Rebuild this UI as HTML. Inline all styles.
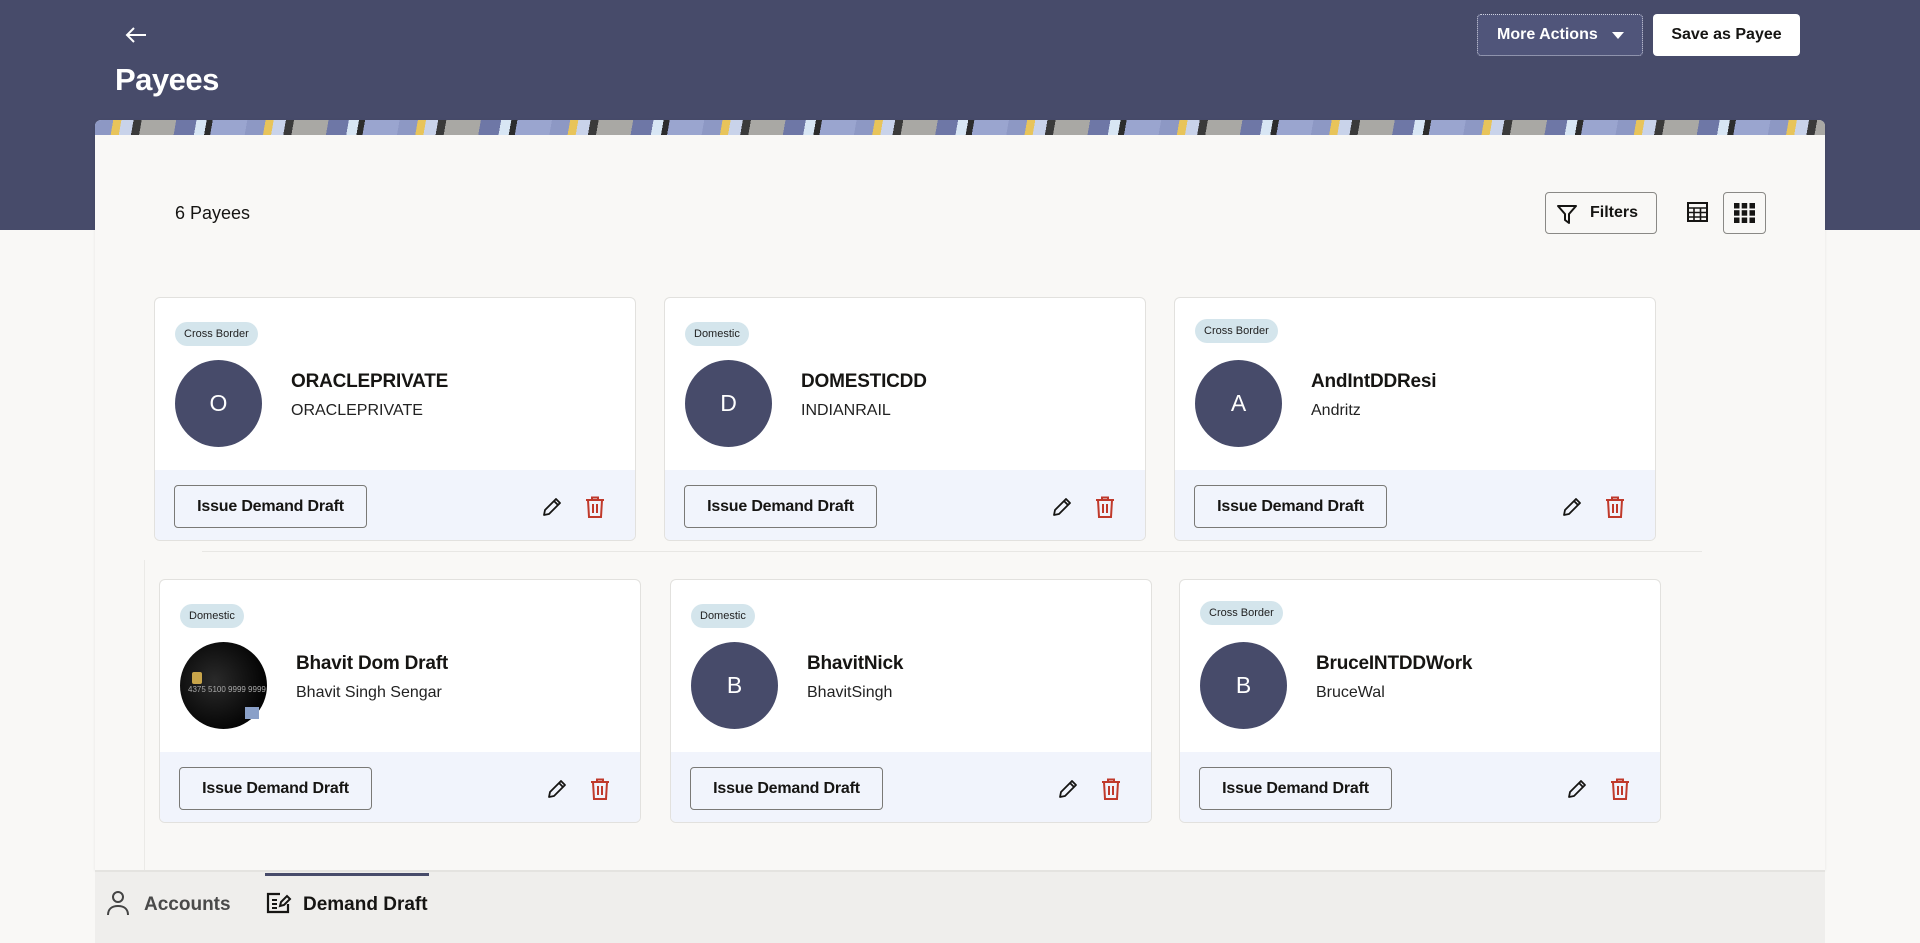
<!DOCTYPE html>
<html><head><meta charset="utf-8"><style>
*{box-sizing:border-box;margin:0;padding:0}
body{width:1920px;height:943px;overflow:hidden;background:#f9f8f6;font-family:"Liberation Sans",sans-serif;position:relative;color:#161513}
.hdr{position:absolute;left:0;top:0;width:1920px;height:230px;background:#474b6a}
.abs{position:absolute}
.panel{position:absolute;left:95px;top:120px;width:1730px;height:750px;background:#f9f8f6;border-radius:6px 6px 0 0;overflow:hidden;box-shadow:0 1px 3px rgba(0,0,0,.08)}
.strip{position:absolute;left:0;top:0;width:100%;height:15px;background:repeating-linear-gradient(100deg,#8d98c4 0 18px,#e8c45a 18px 26px,#c9d3ea 26px 38px,#3a3a3a 38px 46px,#a9a8a4 46px 80px,#6e77a6 80px 100px,#d8e6f4 100px 110px,#2c2c2c 110px 116px,#9aa5cf 116px 150px)}
.card{position:absolute;width:482px;height:244px;background:#fff;border:1px solid #e2e1de;border-radius:6px;overflow:hidden}
.chip{position:absolute;left:20px;top:24px;height:24px;padding:0 9px;border-radius:12px;background:#d4e5ec;font-size:11px;line-height:24px;color:#222}
.av{position:absolute;left:20px;top:62px;width:87px;height:87px;border-radius:50%;background:#474b6a;color:#fff;font-size:23px;text-align:center;line-height:87px}
.nm{position:absolute;left:136px;top:73px;font-size:19px;font-weight:bold;letter-spacing:-.2px}
.sb{position:absolute;left:136px;top:104px;font-size:16px;color:#222}
.ft{position:absolute;left:0;top:172px;width:100%;height:72px;background:#f1f4fc}
.btn{position:absolute;left:19px;top:15px;width:193px;height:43px;border:1px solid #7a7976;border-radius:4px;font-size:16px;font-weight:bold;text-align:center;line-height:41px;letter-spacing:-.2px}
.ed{position:absolute;left:386px;top:26px}
.tr{position:absolute;left:429px;top:26px}
</style></head><body>
<div class="hdr"></div>
<svg class="abs" style="left:124px;top:26px" width="24" height="18" viewBox="0 0 24 18"><path d="M22 9H3M10 2L3 9l7 7" stroke="#fff" stroke-width="2" fill="none"/></svg>
<div class="abs" style="left:115px;top:62px;font-size:31px;font-weight:bold;color:#fff;letter-spacing:-.5px">Payees</div>
<div class="abs" style="left:1477px;top:14px;width:166px;height:42px;border:1px dotted #cfd2e0;border-radius:4px;background:#50557a;color:#fff;font-size:16px;font-weight:bold;line-height:40px;padding-left:19px">More Actions<span style="position:absolute;right:18px;top:17px;border:6px solid transparent;border-top:7px solid #fff;border-bottom:0"></span></div>
<div class="abs" style="left:1653px;top:14px;width:147px;height:42px;border-radius:4px;background:#fff;font-size:16px;font-weight:bold;line-height:42px;text-align:center">Save as Payee</div>
<div class="panel"><div class="strip"></div></div>
<div class="abs" style="left:175px;top:203px;font-size:18px">6 Payees</div>
<div class="abs" style="left:1545px;top:192px;width:112px;height:42px;border:1px solid #8a8986;border-radius:4px;font-size:16px;font-weight:bold;line-height:40px;padding-left:44px">Filters
<svg class="abs" style="left:10px;top:10px" width="22" height="22" viewBox="0 0 22 22"><path d="M2 3h18l-7 8v9l-4-3v-6z" stroke="#161513" stroke-width="2" fill="none" stroke-linejoin="round"/></svg></div>
<svg class="abs" style="left:1687px;top:202px" width="21" height="20" viewBox="0 0 21 20"><rect x="1" y="1" width="19" height="18" fill="none" stroke="#161513" stroke-width="2"/><path d="M1 6h19M1 10.5h19M1 15h19M7 6v13M13.5 6v13" stroke="#161513" stroke-width="1.6"/></svg>
<div class="abs" style="left:1723px;top:192px;width:43px;height:42px;border:1px solid #8a8986;border-radius:4px"></div>
<svg class="abs" style="left:1734px;top:203px" width="21" height="20" viewBox="0 0 21 20"><g fill="#161513"><rect x="0" y="0" width="5.5" height="5.5"/><rect x="7.7" y="0" width="5.5" height="5.5"/><rect x="15.5" y="0" width="5.5" height="5.5"/><rect x="0" y="7.2" width="5.5" height="5.5"/><rect x="7.7" y="7.2" width="5.5" height="5.5"/><rect x="15.5" y="7.2" width="5.5" height="5.5"/><rect x="0" y="14.5" width="5.5" height="5.5"/><rect x="7.7" y="14.5" width="5.5" height="5.5"/><rect x="15.5" y="14.5" width="5.5" height="5.5"/></g></svg>
<div class="abs" style="left:202px;top:551px;width:1500px;height:1px;background:#e8e7e4"></div>
<div class="abs" style="left:144px;top:560px;width:1px;height:310px;background:#ebeae7"></div>

<div class="card" style="left:154px;top:297px"><div class="chip">Cross Border</div><div class="av">O</div><div class="nm">ORACLEPRIVATE</div><div class="sb">ORACLEPRIVATE</div><div class="ft"><div class="btn">Issue Demand Draft</div>
<svg class="ed" width="22" height="22" viewBox="0 0 22 22"><path d="M3 19l1-5L15 3l4 4L8 18zM13 5l4 4" stroke="#161513" stroke-width="1.8" fill="none" stroke-linejoin="round"/></svg>
<svg class="tr" width="22" height="22" viewBox="0 0 22 22"><path d="M2 4h18M8 4V1.5h6V4M4 4l1 17h12l1-17M9 8v9M13 8v9" stroke="#c0392b" stroke-width="2" fill="none"/></svg></div></div>

<div class="card" style="left:664px;top:297px"><div class="chip">Domestic</div><div class="av">D</div><div class="nm">DOMESTICDD</div><div class="sb">INDIANRAIL</div><div class="ft"><div class="btn">Issue Demand Draft</div>
<svg class="ed" width="22" height="22" viewBox="0 0 22 22"><path d="M3 19l1-5L15 3l4 4L8 18zM13 5l4 4" stroke="#161513" stroke-width="1.8" fill="none" stroke-linejoin="round"/></svg>
<svg class="tr" width="22" height="22" viewBox="0 0 22 22"><path d="M2 4h18M8 4V1.5h6V4M4 4l1 17h12l1-17M9 8v9M13 8v9" stroke="#c0392b" stroke-width="2" fill="none"/></svg></div></div>

<div class="card" style="left:1174px;top:297px"><div class="chip" style="top:21px">Cross Border</div><div class="av">A</div><div class="nm">AndIntDDResi</div><div class="sb">Andritz</div><div class="ft"><div class="btn">Issue Demand Draft</div>
<svg class="ed" width="22" height="22" viewBox="0 0 22 22"><path d="M3 19l1-5L15 3l4 4L8 18zM13 5l4 4" stroke="#161513" stroke-width="1.8" fill="none" stroke-linejoin="round"/></svg>
<svg class="tr" width="22" height="22" viewBox="0 0 22 22"><path d="M2 4h18M8 4V1.5h6V4M4 4l1 17h12l1-17M9 8v9M13 8v9" stroke="#c0392b" stroke-width="2" fill="none"/></svg></div></div>

<div class="card" style="left:159px;top:579px"><div class="chip">Domestic</div><div class="av" style="background:radial-gradient(circle at 40% 45%,#2a2a2a,#050505 70%)"><span style="position:absolute;left:12px;top:30px;width:10px;height:12px;background:#c9a54a;border-radius:2px"></span><span style="position:absolute;left:8px;top:44px;font-size:8px;line-height:8px;color:#aaa">4375 5100 9999 9999</span><span style="position:absolute;right:8px;bottom:10px;width:14px;height:12px;background:#8aa0c8"></span></div><div class="nm">Bhavit Dom Draft</div><div class="sb">Bhavit Singh Sengar</div><div class="ft"><div class="btn">Issue Demand Draft</div>
<svg class="ed" width="22" height="22" viewBox="0 0 22 22"><path d="M3 19l1-5L15 3l4 4L8 18zM13 5l4 4" stroke="#161513" stroke-width="1.8" fill="none" stroke-linejoin="round"/></svg>
<svg class="tr" width="22" height="22" viewBox="0 0 22 22"><path d="M2 4h18M8 4V1.5h6V4M4 4l1 17h12l1-17M9 8v9M13 8v9" stroke="#c0392b" stroke-width="2" fill="none"/></svg></div></div>

<div class="card" style="left:670px;top:579px"><div class="chip">Domestic</div><div class="av">B</div><div class="nm">BhavitNick</div><div class="sb">BhavitSingh</div><div class="ft"><div class="btn">Issue Demand Draft</div>
<svg class="ed" width="22" height="22" viewBox="0 0 22 22"><path d="M3 19l1-5L15 3l4 4L8 18zM13 5l4 4" stroke="#161513" stroke-width="1.8" fill="none" stroke-linejoin="round"/></svg>
<svg class="tr" width="22" height="22" viewBox="0 0 22 22"><path d="M2 4h18M8 4V1.5h6V4M4 4l1 17h12l1-17M9 8v9M13 8v9" stroke="#c0392b" stroke-width="2" fill="none"/></svg></div></div>

<div class="card" style="left:1179px;top:579px"><div class="chip" style="top:21px">Cross Border</div><div class="av">B</div><div class="nm">BruceINTDDWork</div><div class="sb">BruceWal</div><div class="ft"><div class="btn">Issue Demand Draft</div>
<svg class="ed" width="22" height="22" viewBox="0 0 22 22"><path d="M3 19l1-5L15 3l4 4L8 18zM13 5l4 4" stroke="#161513" stroke-width="1.8" fill="none" stroke-linejoin="round"/></svg>
<svg class="tr" width="22" height="22" viewBox="0 0 22 22"><path d="M2 4h18M8 4V1.5h6V4M4 4l1 17h12l1-17M9 8v9M13 8v9" stroke="#c0392b" stroke-width="2" fill="none"/></svg></div></div>

<div class="abs" style="left:95px;top:870px;width:1730px;height:73px;background:#efeeec;border-top:2px solid #e4e3e0"></div>
<div class="abs" style="left:265px;top:873px;width:164px;height:3px;background:#474b6a"></div>
<svg class="abs" style="left:107px;top:890px" width="22" height="26" viewBox="0 0 22 26"><circle cx="11" cy="7" r="5" stroke="#444" stroke-width="2" fill="none"/><path d="M1 25c0-6 4-9 10-9s10 3 10 9" stroke="#444" stroke-width="2" fill="none"/></svg>
<div class="abs" style="left:144px;top:894px;font-size:19px;font-weight:bold;color:#4a4a4a">Accounts</div>
<svg class="abs" style="left:266px;top:892px" width="26" height="22" viewBox="0 0 26 22"><path d="M14 2H2v18h20v-8" stroke="#161513" stroke-width="2.2" fill="none"/><path d="M6 8h5M6 12h5M6 16h5M14 14l1-4 6-6 3 3-6 6z" stroke="#161513" stroke-width="2" fill="none"/></svg>
<div class="abs" style="left:303px;top:894px;font-size:19px;font-weight:bold">Demand Draft</div>
</body></html>
